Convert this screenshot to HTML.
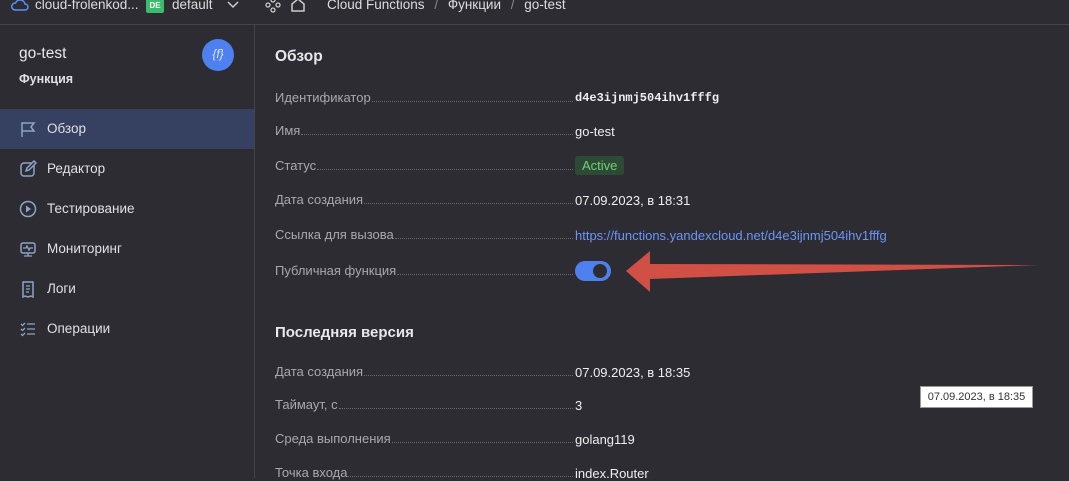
<!DOCTYPE html><html><head><meta charset="utf-8"><style>
body{margin:0;width:1069px;height:478px;overflow:hidden;background:#2d2c33;font-family:"Liberation Sans",sans-serif;color:#e8e8ea;position:relative}
.a{position:absolute;white-space:nowrap}
.top{position:absolute;left:0;top:0;width:1069px;height:24px;border-bottom:1px solid #45444b}
.side{position:absolute;left:0;top:25px;width:254px;height:453px;border-right:1px solid #45444b}
.nav{position:absolute;left:0;width:254px;height:40px;font-size:13.5px;color:#e0e0e3}
.nav span{position:absolute;left:47px;top:12px}
.nav svg{position:absolute;left:19px;top:11px}
.lab{position:absolute;left:275px;width:300px;font-size:13px;color:#a9a8ae;display:flex;align-items:flex-end}
.lab i{flex:1;border-bottom:1px dotted #6b6a70;margin:0 2px 3px 1px}
.val{position:absolute;left:575px;font-size:13px;color:#efeff1}
</style></head><body>
<div class="top"></div>
<svg class="a" style="left:11px;top:-2px" width="18" height="16" viewBox="0 0 18 16"><path d="M4 12a3.5 3.5 0 0 1 .5-7A5 5 0 0 1 14 6a3 3 0 0 1 0 6z" fill="none" stroke="#5b8ff9" stroke-width="1.5"/></svg>
<div class="a" style="left:35px;top:-3px;font-size:13.5px;color:#ddd">cloud-frolenkod...</div>
<div class="a" style="left:146px;top:-2px;width:18px;height:15px;background:#3dbb6c;border-radius:2px;color:#fff;font-size:8px;font-weight:bold;text-align:center;line-height:15px">DE</div>
<div class="a" style="left:172px;top:-3px;font-size:13.5px;color:#ddd">default</div>
<svg class="a" style="left:226px;top:0" width="14" height="10"><path d="M2 2l5 5 5-5" fill="none" stroke="#ccc" stroke-width="1.5"/></svg>
<svg class="a" style="left:264px;top:-3px" width="18" height="16"><g fill="none" stroke="#ccc" stroke-width="1.3"><circle cx="9" cy="3" r="2"/><circle cx="4" cy="8" r="2"/><circle cx="14" cy="8" r="2"/><circle cx="9" cy="13" r="2"/></g></svg>
<svg class="a" style="left:290px;top:-2px" width="16" height="14"><path d="M2 6l6-5 6 5v7H2z" fill="none" stroke="#ccc" stroke-width="1.5"/></svg>
<div class="a" style="left:327px;top:-3px;font-size:13.5px;color:#ddd">Cloud Functions <span style="color:#888;margin:0 6px">/</span> Функции <span style="color:#888;margin:0 6px">/</span> go-test</div>
<div class="side"></div>
<div class="a" style="left:19px;top:45px;font-size:15.5px;color:#e8e8ea">go-test</div>
<div class="a" style="left:19px;top:72px;font-size:12.5px;font-weight:bold;color:#e0e0e3">Функция</div>
<div class="a" style="left:202px;top:39px;width:32px;height:32px;border-radius:50%;background:#4f80f0;color:#dce6ff;font-size:12px;text-align:center;line-height:31px;font-style:italic">{<i>f</i>}</div>
<div class="nav" style="top:109px;background:#364060"><svg width="18" height="18"><path d="M3 17V3h12l-3 4 3 4H3" fill="none" stroke="#8da4c8" stroke-width="1.5"/></svg><span>Обзор</span></div>
<div class="nav" style="top:149px"><svg width="18" height="18"><rect x="2" y="3" width="13" height="13" rx="3" fill="none" stroke="#8da4c8" stroke-width="1.5"/><path d="M7 11l1-3 7-7 2 2-7 7z" fill="#2d2c33" stroke="#8da4c8" stroke-width="1.5"/></svg><span>Редактор</span></div>
<div class="nav" style="top:189px"><svg width="18" height="18"><circle cx="9" cy="9" r="7.5" fill="none" stroke="#8da4c8" stroke-width="1.5"/><path d="M7 5.5v7l5-3.5z" fill="#8da4c8"/></svg><span>Тестирование</span></div>
<div class="nav" style="top:229px"><svg width="18" height="18"><rect x="2" y="3" width="14" height="10" rx="2" fill="none" stroke="#8da4c8" stroke-width="1.5"/><path d="M4 8h3l1-2 2 4 1-2h3M9 13v3M5 16h8" fill="none" stroke="#8da4c8" stroke-width="1.3"/></svg><span>Мониторинг</span></div>
<div class="nav" style="top:269px"><svg width="18" height="18"><path d="M4 2h10v15l-2-1-3 1-3-1-2 1z" fill="none" stroke="#8da4c8" stroke-width="1.5"/><path d="M7 6h4M7 9h4M7 12h3" stroke="#8da4c8" stroke-width="1.3"/></svg><span>Логи</span></div>
<div class="nav" style="top:309px"><svg width="18" height="18"><path d="M2 4l1.5 1.5L6 3M2 9l1.5 1.5L6 8M2 14l1.5 1.5L6 13M8 4h8M8 9h8M8 14h8" fill="none" stroke="#8da4c8" stroke-width="1.3"/></svg><span>Операции</span></div>
<div class="a" style="left:275px;top:48px;font-size:15.5px;font-weight:bold">Обзор</div>
<div class="lab" style="top:90px">Идентификатор<i></i></div><div class="val" style="top:91px;font-family:'Liberation Mono',monospace;font-size:12px;font-weight:bold">d4e3ijnmj504ihv1fffg</div>
<div class="lab" style="top:123px">Имя<i></i></div><div class="val" style="top:124px">go-test</div>
<div class="lab" style="top:158px">Статус<i></i></div><div class="val" style="top:156px;background:#2f4a34;color:#6fcf7b;padding:2px 7px;border-radius:3px">Active</div>
<div class="lab" style="top:192px">Дата создания<i></i></div><div class="val" style="top:193px">07.09.2023, в 18:31</div>
<div class="lab" style="top:227px">Ссылка для вызова<i></i></div><div class="val" style="top:228px;color:#6b95f7">https://functions.yandexcloud.net/d4e3ijnmj504ihv1fffg</div>
<div class="lab" style="top:263px">Публичная функция<i></i></div>
<div class="a" style="left:575px;top:261px;width:36px;height:20px;border-radius:10px;background:#4f80f0"><div style="position:absolute;left:18px;top:3px;width:14px;height:14px;border-radius:50%;background:#2d2c33"></div></div>
<svg class="a" style="left:620px;top:248px" width="420" height="46"><polygon points="6,23 30,3 30,16 418,17 30,31 30,44" fill="#d05045"/></svg>
<div class="a" style="left:275px;top:324px;font-size:15px;font-weight:bold">Последняя версия</div>
<div class="lab" style="top:364px">Дата создания<i></i></div><div class="val" style="top:365px">07.09.2023, в 18:35</div>
<div class="lab" style="top:397px">Таймаут, с<i></i></div><div class="val" style="top:398px">3</div>
<div class="lab" style="top:431px">Среда выполнения<i></i></div><div class="val" style="top:432px">golang119</div>
<div class="lab" style="top:465px">Точка входа<i></i></div><div class="val" style="top:466px">index.Router</div>
<div class="a" style="left:920px;top:386px;width:113px;height:22px;background:#fff;border:1px solid #999;box-sizing:border-box;color:#333;font-size:11px;line-height:20px;text-align:center">07.09.2023, в 18:35</div>
</body></html>
